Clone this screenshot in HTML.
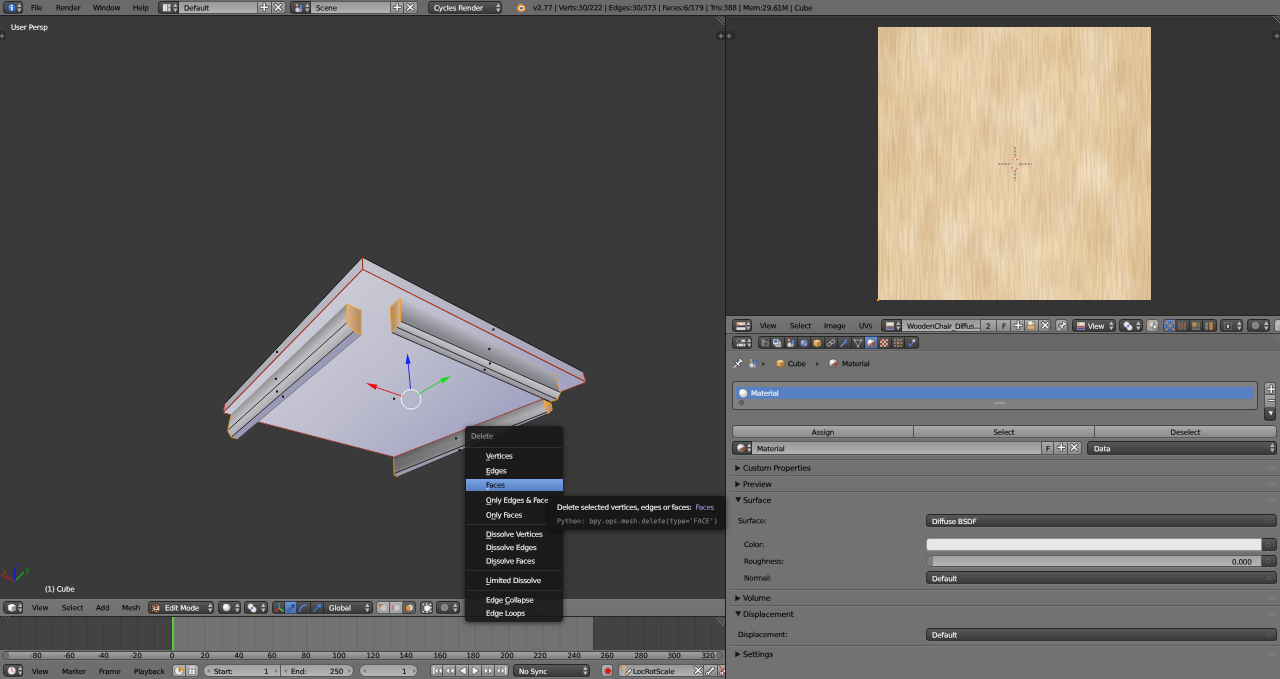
<!DOCTYPE html><html><head><meta charset="utf-8"><title>Blender</title><style>
*{box-sizing:border-box;margin:0;padding:0}
html,body{width:1280px;height:679px;overflow:hidden;background:#393939}
body{position:relative;font-family:"DejaVu Sans","Liberation Sans",sans-serif;font-size:7.2px;letter-spacing:-.19px;color:#000;line-height:1}
.a{position:absolute}
.t{position:absolute;white-space:nowrap;line-height:8px;height:8px}
.w{position:absolute;border:1px solid rgba(24,24,24,.55);white-space:nowrap;overflow:hidden;box-shadow:0 1px 0 rgba(255,255,255,.07)}
.ra{border-radius:3.5px}.rl{border-radius:3.5px 0 0 3.5px}.rr{border-radius:0 3.5px 3.5px 0}.rm{border-radius:0}
.rt{border-radius:3.5px 3.5px 0 0}.rb{border-radius:0 0 3.5px 3.5px}
.pl{border-radius:7px 0 0 7px}.pr{border-radius:0 7px 7px 0}.pa{border-radius:7px}
.nl{border-left-width:0}
.tool{background:linear-gradient(#a9a9a9,#8b8b8b);color:#000}
.menu{background:linear-gradient(#585858,#3a3a3a);color:#fff;border-color:rgba(16,16,16,.5)}
.text{background:linear-gradient(#979797,#b3b3b3);color:#000}
.num{background:linear-gradient(#a0a0a0,#b6b6b6);color:#000}
.tog{background:#9b9b9b;color:#000}
.togl{background:linear-gradient(#b2b2b2,#a2a2a2)}
.togsel{background:#626262;color:#fff}
.radsel{background:linear-gradient(#6690d2,#4670b2);color:#000;border-color:rgba(16,16,16,.5)}
.hdr{position:absolute;background:#6a6a6a}
.lbl{position:absolute;white-space:nowrap;line-height:8px;height:8px;color:#000}
.wl{position:absolute;left:5px;top:0;line-height:8px;height:8px;white-space:nowrap}
.ud{position:absolute;width:4px;height:9px}
svg{position:absolute;overflow:visible}
.mi{position:absolute;left:20.6px;letter-spacing:-.27px;white-space:nowrap;line-height:8px;height:8px;color:#fff}
.sep{position:absolute;left:1px;right:1px;height:1px;background:#2f2f2f}
.ph{position:absolute;left:730px;width:550px;height:1px;background:#5c5c5c;box-shadow:0 1px 0 #7c7c7c}
u{text-decoration:underline;text-decoration-thickness:.45px;text-underline-offset:1px;text-decoration-color:rgba(255,255,255,.75)}
</style></head><body><div id="root" class="a" style="left:0;top:0;width:1280px;height:679px;filter:contrast(1.001);-webkit-text-stroke:.1px">
<div class="a" style="left:0;top:16px;width:725px;height:583px;background:#3a3a3a"></div>
<div class="a" style="left:726px;top:16px;width:554px;height:300px;background:#343434"></div>
<div class="a" style="left:726px;top:16px;width:554px;height:1px;background:#3d3d3d"></div>
<div class="a" style="left:0;top:15px;width:1280px;height:1px;background:#1d1d1d"></div>
<div class="a" style="left:725px;top:16px;width:1px;height:663px;background:#1b1b1b"></div>
<div class="hdr" style="left:0px;top:0px;width:1280px;height:15px;background:#6a6a6a"></div>
<div class="w menu ra" style="left:3px;top:1px;width:20px;height:13px;"><svg class="a" style="left:3px;top:0.8px" width="9.5" height="9.5" viewBox="0 0 10 10"><circle cx="5" cy="5" r="4.3" fill="#3b6fc4" stroke="#1c3a78" stroke-width=".6"/><circle cx="4.2" cy="3.6" r="2.2" fill="#8fb4ee" opacity=".55"/><rect x="4.3" y="4.2" width="1.5" height="3.6" fill="#fff"/><rect x="4.3" y="2" width="1.5" height="1.4" fill="#fff"/></svg><svg class="a" style="left:13.1px;top:0.9px" width="4.6" height="9.6" viewBox="0 0 4.6 9.6"><path d="M2.3 0.3 L4.5 4 H0.1Z M2.3 9.3 L4.5 5.6 H0.1Z" fill="#b4b4b4"/></svg></div>
<div class="t" style="left:30.5px;top:4px;transform:translateY(0.3px) rotate(.05deg);">File</div>
<div class="t" style="left:56.3px;top:4px;transform:translateY(0.3px) rotate(.05deg);">Render</div>
<div class="t" style="left:93px;top:4px;transform:translateY(0.3px) rotate(.05deg);">Window</div>
<div class="t" style="left:133.3px;top:4px;transform:translateY(0.3px) rotate(.05deg);">Help</div>
<div class="w menu rl" style="left:158px;top:1px;width:21px;height:13px;"><svg class="a" style="left:3.2px;top:1px" width="9.5" height="9.5" viewBox="0 0 10 10"><rect x="0.8" y="1" width="8.4" height="8" fill="#dcdcdc" stroke="#555" stroke-width=".5"/><rect x="5.6" y="1.4" width="1" height="7.2" fill="#666"/><rect x="6.8" y="4.6" width="2.2" height=".8" fill="#666"/></svg><svg class="a" style="left:14.3px;top:0.9px" width="4.6" height="9.6" viewBox="0 0 4.6 9.6"><path d="M2.3 0.3 L4.5 4 H0.1Z M2.3 9.3 L4.5 5.6 H0.1Z" fill="#b4b4b4"/></svg></div>
<div class="w text rm nl" style="left:179px;top:1px;width:79px;height:13px;"><span class="wl" style="top:2px;transform:translateY(0.55px) rotate(.05deg);left:4.5px">Default</span></div>
<div class="w tool rm nl" style="left:258px;top:1px;width:14px;height:13px;"><svg class="a" style="left:1.3px;top:0.3px" width="10.4" height="10.4" viewBox="0 0 10 10"><path d="M5 .8V9.2M.8 5H9.2" stroke="#303030" stroke-width="2.7"/><path d="M5 1.3V8.7M1.3 5H8.7" stroke="#f4f4f4" stroke-width="1.5"/></svg></div>
<div class="w tool rr nl" style="left:272px;top:1px;width:14px;height:13px;"><svg class="a" style="left:1.3px;top:0.3px" width="10.4" height="10.4" viewBox="0 0 10 10"><path d="M1.5 1.5L8.5 8.5M8.5 1.5L1.5 8.5" stroke="#303030" stroke-width="2.7"/><path d="M1.9 1.9L8.1 8.1M8.1 1.9L1.9 8.1" stroke="#f4f4f4" stroke-width="1.5"/></svg></div>
<div class="w menu rl" style="left:290px;top:1px;width:21px;height:13px;"><svg class="a" style="left:2.6px;top:0.6px" width="10" height="10" viewBox="0 0 10 10"><circle cx="3.6" cy="6.8" r="2.5" fill="#d2d2d2" stroke="#4a4a4a" stroke-width=".4"/><rect x="5.4" y="2" width="3" height="5.2" fill="#5f82c4" stroke="#2c4478" stroke-width=".4"/><rect x="1.8" y="1" width="2.2" height="2.4" fill="#d89a58"/><circle cx="6.2" cy="7.6" r="1.5" fill="#a8a8a8"/></svg><svg class="a" style="left:14.3px;top:0.9px" width="4.6" height="9.6" viewBox="0 0 4.6 9.6"><path d="M2.3 0.3 L4.5 4 H0.1Z M2.3 9.3 L4.5 5.6 H0.1Z" fill="#b4b4b4"/></svg></div>
<div class="w text rm nl" style="left:311px;top:1px;width:80px;height:13px;"><span class="wl" style="top:2px;transform:translateY(0.55px) rotate(.05deg);left:4.5px">Scene</span></div>
<div class="w tool rm nl" style="left:391px;top:1px;width:13px;height:13px;"><svg class="a" style="left:1.3px;top:0.3px" width="10.4" height="10.4" viewBox="0 0 10 10"><path d="M5 .8V9.2M.8 5H9.2" stroke="#303030" stroke-width="2.7"/><path d="M5 1.3V8.7M1.3 5H8.7" stroke="#f4f4f4" stroke-width="1.5"/></svg></div>
<div class="w tool rr nl" style="left:404px;top:1px;width:14px;height:13px;"><svg class="a" style="left:1.3px;top:0.3px" width="10.4" height="10.4" viewBox="0 0 10 10"><path d="M1.5 1.5L8.5 8.5M8.5 1.5L1.5 8.5" stroke="#303030" stroke-width="2.7"/><path d="M1.9 1.9L8.1 8.1M8.1 1.9L1.9 8.1" stroke="#f4f4f4" stroke-width="1.5"/></svg></div>
<div class="w menu ra" style="left:428px;top:1px;width:74px;height:13px;"><span class="wl" style="top:2px;transform:translateY(0.55px) rotate(.05deg);left:5px">Cycles Render</span><svg class="a" style="left:67.2px;top:0.9px" width="4.6" height="9.6" viewBox="0 0 4.6 9.6"><path d="M2.3 0.3 L4.5 4 H0.1Z M2.3 9.3 L4.5 5.6 H0.1Z" fill="#bcbcbc"/></svg></div>
<svg class="a" style="left:514.5px;top:2px" width="11" height="11" viewBox="0 0 10 10"><ellipse cx="5.6" cy="5.6" rx="3.9" ry="3.3" fill="#f5922a"/><path d="M0.4 6.2 L5 2.2 L3.4 2.2 L4.2 1 L7.4 3.2Z" fill="#f5922a"/><circle cx="5.9" cy="5.6" r="2.1" fill="#fff"/><circle cx="5.9" cy="5.6" r="1.25" fill="#2b5fa8"/></svg>
<div class="t" style="left:533px;top:4px;transform:translateY(0.3px) rotate(.05deg);">v2.77 | Verts:30/222 | Edges:30/373 | Faces:6/179 | Tris:388 | Mem:29.61M | Cube</div>
<div class="t" style="left:10.8px;top:23px;transform:translateY(0.85px) rotate(.05deg);color:#fff;">User Persp</div>
<div class="t" style="left:44.7px;top:585px;transform:translateY(0.5px) rotate(.05deg);color:#fff;">(1) Cube</div>
<div class="a" style="left:0;top:31px;width:6px;height:9px;background:#2b2b2b;border-radius:0 3px 3px 0"></div><svg class="a" style="left:-1px;top:33px" width="6" height="6" viewBox="0 0 6 6"><path d="M3 .6V5.4M.6 3H5.4" stroke="#8e8e8e" stroke-width="1"/></svg>
<div class="a" style="left:716px;top:31px;width:9px;height:9px;background:#2b2b2b;border-radius:3px 0 0 3px"></div>
<svg class="a" style="left:718px;top:33px" width="6" height="6" viewBox="0 0 6 6"><path d="M3 .6V5.4M.6 3H5.4" stroke="#8e8e8e" stroke-width="1"/></svg>
<div class="a" style="left:726px;top:31px;width:9px;height:9px;background:#2b2b2b;border-radius:0 3px 3px 0"></div>
<svg class="a" style="left:726px;top:33px" width="6" height="6" viewBox="0 0 6 6"><path d="M3 .6V5.4M.6 3H5.4" stroke="#8e8e8e" stroke-width="1"/></svg>
<div class="a" style="left:1272px;top:31px;width:8px;height:9px;background:#2b2b2b;border-radius:3px 0 0 3px"></div><svg class="a" style="left:1274px;top:33px" width="6" height="6" viewBox="0 0 6 6"><path d="M3 .6V5.4M.6 3H5.4" stroke="#8e8e8e" stroke-width="1"/></svg>
<svg class="a" style="left:0;top:0" width="725" height="600" viewBox="0 0 725 600">
<defs>
<linearGradient id="gu" gradientUnits="userSpaceOnUse" x1="330" y1="290" x2="470" y2="450"><stop offset="0" stop-color="#cbcbd5"/><stop offset=".5" stop-color="#bcbcce"/><stop offset="1" stop-color="#a3a3c2"/></linearGradient>
<linearGradient id="gl" gradientUnits="userSpaceOnUse" x1="362" y1="262" x2="224" y2="408"><stop offset="0" stop-color="#bcbcc6"/><stop offset="1" stop-color="#a9a9b3"/></linearGradient>
<linearGradient id="gr" gradientUnits="userSpaceOnUse" x1="362" y1="262" x2="585" y2="377"><stop offset="0" stop-color="#c4c4ce"/><stop offset=".5" stop-color="#b0b0c0"/><stop offset="1" stop-color="#a2a2b6"/></linearGradient>
<linearGradient id="l1" gradientUnits="userSpaceOnUse" x1="283" y1="353" x2="295" y2="366"><stop offset="0" stop-color="#c2c2c8"/><stop offset=".45" stop-color="#8e8e94"/><stop offset="1" stop-color="#bdbdc1"/></linearGradient>
<linearGradient id="l2" gradientUnits="userSpaceOnUse" x1="290" y1="376" x2="297" y2="384"><stop offset="0" stop-color="#c0c0c4"/><stop offset="1" stop-color="#a2a2a8"/></linearGradient>
<linearGradient id="r1" gradientUnits="userSpaceOnUse" x1="482" y1="332" x2="474" y2="350"><stop offset="0" stop-color="#c8c8d2"/><stop offset=".5" stop-color="#a6a6b0"/><stop offset="1" stop-color="#86868e"/></linearGradient>
<linearGradient id="r2" gradientUnits="userSpaceOnUse" x1="478" y1="357" x2="474" y2="366"><stop offset="0" stop-color="#c2c2c8"/><stop offset="1" stop-color="#9a9aa2"/></linearGradient>
<linearGradient id="r3" gradientUnits="userSpaceOnUse" x1="475" y1="364" x2="472" y2="371"><stop offset="0" stop-color="#a6a6ae"/><stop offset="1" stop-color="#808088"/></linearGradient>
<linearGradient id="b1" gradientUnits="userSpaceOnUse" x1="396" y1="466" x2="546" y2="405"><stop offset="0" stop-color="#6c6c6e"/><stop offset=".5" stop-color="#8e8e90"/><stop offset="1" stop-color="#b8b8bc"/></linearGradient><linearGradient id="b1o" gradientUnits="userSpaceOnUse" x1="466" y1="428" x2="472" y2="444"><stop offset="0" stop-color="#000" stop-opacity=".22"/><stop offset=".5" stop-color="#000" stop-opacity="0"/><stop offset="1" stop-color="#fff" stop-opacity=".18"/></linearGradient>
<linearGradient id="wc" x1="0" y1="0" x2="1" y2="0"><stop offset="0" stop-color="#d8b68a"/><stop offset=".55" stop-color="#c29c70"/><stop offset="1" stop-color="#b48c60"/></linearGradient><linearGradient id="wc2" x1="0" y1="0" x2="1" y2="0"><stop offset="0" stop-color="#b08858"/><stop offset=".5" stop-color="#c09868"/><stop offset="1" stop-color="#d8b88e"/></linearGradient>
</defs>
<polygon points="394.1,457 541.7,399.7 548.4,411.4 394.1,473.6" fill="url(#b1)"/>
<polygon points="394.1,457 541.7,399.7 548.4,411.4 394.1,473.6" fill="url(#b1o)"/>
<polygon points="394.1,473.6 548.4,411.4 549.4,412.8 397.4,476.7" fill="#9a9aac"/>
<path d="M394.1 473.6L548.4 411.4" stroke="#161616" stroke-width=".85"/>
<path d="M397.4 476.9L549.6 413.2" stroke="#2a2a2a" stroke-width=".6"/>
<path d="M393.7 457.6L394.1 475.2L397.4 476.8" fill="none" stroke="#f0a030" stroke-width=".9"/>
<polygon points="542.9,399.6 551.1,403.7 552.2,409.9 548,413.6 544.5,407" fill="url(#wc)" stroke="#f0a030" stroke-width=".9"/>
<polygon points="362.4,257.1 362.7,269.3 223.2,412.7 224.6,403.8" fill="url(#gl)"/>
<polygon points="362.4,257.1 583.1,371.8 586.2,382 362.7,269.3" fill="url(#gr)"/>
<polygon points="362.7,269.3 586.2,382 394.1,457 223.2,412.7" fill="url(#gu)"/>
<path d="M224.6,403.8 L362.4,257.1 L583.1,371.8" fill="none" stroke="#161616" stroke-width="1"/>
<path d="M362.4,257.1 L362.7,269.3 M223.2,412.7 L362.7,269.3 L586.2,382 M224.6,403.8 L223.2,412.7 M583.1,371.8 L586.2,382" fill="none" stroke="#a62c1a" stroke-width="1.05"/>
<path d="M223.2,412.7 L394.1,457 L586.2,382" fill="none" stroke="#b42c1a" stroke-width="1" stroke-dasharray="2 1.1"/>
<polygon points="346.8,304.2 346.8,322.7 227.6,430.5 231.3,414.2" fill="url(#l1)"/>
<polygon points="346.8,322.7 353.8,331.3 231.3,437.2 227.6,430.5" fill="url(#l2)"/>
<polygon points="353.8,331.3 361.2,334.6 238,438.7 231.3,437.2" fill="#9a9ab6"/>
<path d="M346.8,322.7 L227.6,430.5 M353.8,331.3 L231.3,437.2" stroke="#161616" stroke-width=".85"/>
<path d="M361.2,334.6 L238,438.7" stroke="#4a4a5a" stroke-width=".5"/>
<path d="M346.8,304.2 L231.3,414.2" stroke="#8c8c94" stroke-width=".5"/>
<polygon points="346.8,304.2 361.2,310.1 361.2,334.6 353.8,331.3 346.8,322.7" fill="url(#wc)" stroke="#f0a030" stroke-width=".9"/>
<path d="M231.3,414.2 L227.6,430.5 L231.3,437.2 L238,438.7" fill="none" stroke="#f0a030" stroke-width=".9"/>
<polygon points="400.5,298.2 400.5,321.2 560.4,392.4 554.2,373.2" fill="url(#r1)"/>
<polygon points="400.5,321.2 396.4,327 557.3,399.6 560.4,392.4" fill="url(#r2)"/>
<polygon points="396.4,327 391.6,332.4 550,401.6 557.3,399.6" fill="url(#r3)"/>
<path d="M400.5,321.2 L560.4,392.4 M396.4,327 L557.3,399.6 M391.6,332.4 L550,401.6" stroke="#161616" stroke-width=".85"/>
<polygon points="400.5,298.2 390.2,307.1 391.6,332.4 396.4,327 400.5,321.2" fill="url(#wc2)" stroke="#f0a030" stroke-width=".9"/>
<path d="M554.2,373.2 L560.4,392.4 L557.3,399.6 L550,401.6" fill="none" stroke="#f0a030" stroke-width=".9"/>
<rect x="276" y="350.9" width="2" height="2" fill="#0c0c0c"/>
<rect x="274.9" y="377.9" width="2" height="2" fill="#0c0c0c"/>
<rect x="276" y="390.5" width="2" height="2" fill="#0c0c0c"/>
<rect x="282" y="395.6" width="2" height="2" fill="#0c0c0c"/>
<rect x="393.1" y="397.7" width="2" height="2" fill="#0c0c0c"/>
<rect x="492.4" y="328.5" width="2" height="2" fill="#0c0c0c"/>
<rect x="488.3" y="348.1" width="2" height="2" fill="#0c0c0c"/>
<rect x="488.9" y="362.5" width="2" height="2" fill="#0c0c0c"/>
<rect x="483.7" y="368.7" width="2" height="2" fill="#0c0c0c"/>
<rect x="455" y="437.4" width="2" height="2" fill="#0c0c0c"/>
<rect x="458.6" y="449" width="2" height="2" fill="#0c0c0c"/>
<rect x="352.8" y="318.3" width="2" height="2" fill="#ff9a10"/>
<rect x="394.8" y="315" width="2" height="2" fill="#ff9a10"/>
<rect x="545.6" y="402.2" width="2" height="2" fill="#ff9a10"/>
<rect x="547.6" y="403.4" width="2" height="2" fill="#ff9a10"/>
<path d="M403.1 396.5L376.8 387.5" stroke="#e02020" stroke-width="1"/>
<polygon points="365.7,383 377.4,384.8 375.6,389.8" fill="#ee1010"/>
<path d="M418.1 394.4L441 381" stroke="#20d020" stroke-width="1"/>
<polygon points="451.1,375.9 442.6,383.4 440.2,378.8" fill="#18e018"/>
<path d="M410.6 389.4L408.2 363.5" stroke="#2030e0" stroke-width="1"/>
<polygon points="407.4,353.2 410.6,363.6 405.6,364" fill="#1020f0"/>
<circle cx="411" cy="399.3" r="9.8" fill="none" stroke="#fff" stroke-width=".9"/>
<path d="M14.7 581.2L1.4 574.7" stroke="#cc1a1a" stroke-width="1.1"/><path d="M14.7 581.2L23.8 572.2" stroke="#18a418" stroke-width="1.4"/><path d="M14.7 581.4V568.4" stroke="#1616c4" stroke-width="1.5"/>
<text x="2.6" y="573.6" font-size="7" fill="#d02020">x</text><text x="25.4" y="571.6" font-size="7" fill="#18a418">y</text><text x="16.2" y="567.2" font-size="7" fill="#2828d8">z</text>
</svg>
<div class="a" style="left:0;top:599px;width:725px;height:17px;background:linear-gradient(#767676,#707070)"></div>
<div class="a" style="left:0;top:615.6px;width:725px;height:1.2px;background:#262626"></div>
<div class="w menu ra" style="left:3px;top:601px;width:20px;height:13px;"><svg class="a" style="left:2.6px;top:0.8px" width="9.5" height="9.5" viewBox="0 0 10 10"><path d="M1 2.4L5.6 1l3.4 1.6v5L5 9.2 1 7.4Z" fill="#f2f2f2" stroke="#555" stroke-width=".5"/><path d="M5 4v5.2L9 7.6v-5Z" fill="#9a9a9a"/><path d="M1 2.4L5 4l4-1.4L5.6 1Z" fill="#fff"/></svg><svg class="a" style="left:13.5px;top:0.9px" width="4.6" height="9.6" viewBox="0 0 4.6 9.6"><path d="M2.3 0.3 L4.5 4 H0.1Z M2.3 9.3 L4.5 5.6 H0.1Z" fill="#b4b4b4"/></svg></div>
<div class="t" style="left:31.5px;top:604px;transform:translateY(0.2px) rotate(.05deg);">View</div>
<div class="t" style="left:61.5px;top:604px;transform:translateY(0.2px) rotate(.05deg);">Select</div>
<div class="t" style="left:95.8px;top:604px;transform:translateY(0.2px) rotate(.05deg);">Add</div>
<div class="t" style="left:121.8px;top:604px;transform:translateY(0.2px) rotate(.05deg);">Mesh</div>
<div class="w menu ra" style="left:148px;top:601px;width:66px;height:13px;"><svg class="a" style="left:2.4px;top:0.6px" width="10" height="10" viewBox="0 0 10 10"><path d="M1.6 3L6 1.6l2.6 1.6v4.2L5 8.8 1.6 7.4Z" fill="#c9c9c9" stroke="#444" stroke-width=".5"/><g fill="#f0a050" stroke="#6a1c00" stroke-width=".7"><rect x=".6" y="2" width="2" height="2"/><rect x="4.6" y=".6" width="2" height="2"/><rect x=".6" y="6.4" width="2" height="2"/><rect x="4.2" y="7.6" width="2" height="2"/><rect x="4" y="3.6" width="2" height="2"/></g></svg><span class="wl" style="top:2px;transform:translateY(0.6px) rotate(.05deg);left:15.8px">Edit Mode</span><svg class="a" style="left:58.7px;top:0.9px" width="4.6" height="9.6" viewBox="0 0 4.6 9.6"><path d="M2.3 0.3 L4.5 4 H0.1Z M2.3 9.3 L4.5 5.6 H0.1Z" fill="#bcbcbc"/></svg></div>
<div class="w menu ra" style="left:218px;top:601px;width:23px;height:13px;"><svg class="a" style="left:3px;top:1px" width="9" height="9" viewBox="0 0 10 10"><circle cx="5" cy="5" r="4.2" fill="#d4d4d4" stroke="#4a4a4a" stroke-width=".4"/><circle cx="4" cy="3.8" r="2.6" fill="#f6f6f6"/></svg><svg class="a" style="left:15.7px;top:0.9px" width="4.6" height="9.6" viewBox="0 0 4.6 9.6"><path d="M2.3 0.3 L4.5 4 H0.1Z M2.3 9.3 L4.5 5.6 H0.1Z" fill="#bcbcbc"/></svg></div>
<div class="w menu ra" style="left:244px;top:601px;width:24px;height:13px;"><svg class="a" style="left:2.4px;top:0.8px" width="10" height="10" viewBox="0 0 10 10"><circle cx="3.6" cy="3.4" r="2.9" fill="#e8e8e8" stroke="#555" stroke-width=".4"/><circle cx="6.6" cy="6.6" r="2.9" fill="#e8e8e8" stroke="#555" stroke-width=".4"/><rect x="4" y="4" width="2.2" height="2.2" fill="#2f6fdc" stroke="#fff" stroke-width=".4"/></svg><svg class="a" style="left:16.1px;top:0.9px" width="4.6" height="9.6" viewBox="0 0 4.6 9.6"><path d="M2.3 0.3 L4.5 4 H0.1Z M2.3 9.3 L4.5 5.6 H0.1Z" fill="#bcbcbc"/></svg></div>
<div class="w menu rl" style="left:272px;top:601px;width:13px;height:13px;"><svg class="a" style="left:1px;top:0.4px" width="10.5" height="10.5" viewBox="0 0 10 10"><path d="M5 6V0.6" stroke="#3b7be0" stroke-width="1.3"/><path d="M5 6L0.8 9" stroke="#e03a2a" stroke-width="1.3"/><path d="M5 6L9.2 9" stroke="#5cc83a" stroke-width="1.3"/></svg></div>
<div class="w radsel rm nl" style="left:285px;top:601px;width:12px;height:13px;"><svg class="a" style="left:0.8px;top:0.6px" width="10" height="10" viewBox="0 0 10 10"><path d="M1.6 8.6L6.6 3.4" stroke="#1c3f86" stroke-width="1.8"/><path d="M8.8 1.2L8 5.2 4.8 2Z" fill="#1c3f86"/><path d="M1.6 8.4L6.6 3.2" stroke="#9cc0f4" stroke-width=".6"/></svg></div>
<div class="w menu rm nl" style="left:297px;top:601px;width:14px;height:13px;"><svg class="a" style="left:1.4px;top:0.6px" width="10" height="10" viewBox="0 0 10 10"><path d="M1.4 8.6C2 4.6 4.6 2.2 8.8 1.8" stroke="#4f86d8" stroke-width="1.5" fill="none"/></svg></div>
<div class="w menu rm nl" style="left:311px;top:601px;width:13px;height:13px;"><svg class="a" style="left:1.2px;top:0.6px" width="10" height="10" viewBox="0 0 10 10"><path d="M1.4 8.8L6.2 3.8" stroke="#3d74c8" stroke-width="1.4"/><rect x="5.4" y="1" width="3.6" height="3.6" fill="#4f86d8" stroke="#244d94" stroke-width=".4"/></svg></div>
<div class="w menu rr nl" style="left:324px;top:601px;width:49px;height:13px;"><span class="wl" style="top:2px;transform:translateY(0.6px) rotate(.05deg);left:5.4px">Global</span><svg class="a" style="left:41.3px;top:0.9px" width="4.6" height="9.6" viewBox="0 0 4.6 9.6"><path d="M2.3 0.3 L4.5 4 H0.1Z M2.3 9.3 L4.5 5.6 H0.1Z" fill="#bcbcbc"/></svg></div>
<div class="w togl rl" style="left:376px;top:601px;width:14px;height:13px;"><svg class="a" style="left:0.6px;top:0.4px" width="10.5" height="10.5" viewBox="0 0 10 10"><path d="M2 3.4L6.2 2l2.6 1.4v4L5.2 9 2 7.6Z" fill="#c6c6c6" stroke="#8a8a8a" stroke-width=".5"/><rect x="1" y="2.2" width="2.2" height="2.2" fill="#f6a040" stroke="#7a3a00" stroke-width=".4"/></svg></div>
<div class="w togl rm nl" style="left:390px;top:601px;width:13px;height:13px;"><svg class="a" style="left:0.8px;top:0.4px" width="10.5" height="10.5" viewBox="0 0 10 10"><path d="M2 3.4L6.2 2l2.6 1.4v4L5.2 9 2 7.6Z" fill="#c6c6c6" stroke="#8a8a8a" stroke-width=".5"/><path d="M2 3.4V7.6" stroke="#e0602a" stroke-width="1.2"/></svg></div>
<div class="w togsel rr nl" style="left:403px;top:601px;width:13px;height:13px;"><svg class="a" style="left:0.8px;top:0.4px" width="10.5" height="10.5" viewBox="0 0 10 10"><path d="M2 3.4L6.2 2l2.6 1.4v4L5.2 9 2 7.6Z" fill="#d0d0d0" stroke="#333" stroke-width=".5"/><path d="M2 3.4L5.2 4.6V9L2 7.6Z" fill="#f5a030" stroke="#7a3a00" stroke-width=".4"/></svg></div>
<div class="w togsel ra" style="left:420px;top:601px;width:13px;height:13px;"><svg class="a" style="left:0.8px;top:0.6px" width="10" height="10" viewBox="0 0 10 10"><path d="M2.2 3.2L6 2l2 1.2v3.8L5.2 8.4 2.2 7.2Z" fill="#f4f4f4" stroke="#777" stroke-width=".4"/><g fill="#fff"><rect x=".6" y=".8" width="1.3" height="1.3"/><rect x="4" y=".4" width="1.3" height="1.3"/><rect x="7.8" y=".8" width="1.3" height="1.3"/><rect x=".6" y="8" width="1.3" height="1.3"/><rect x="4.4" y="8.6" width="1.3" height="1.3"/><rect x="8" y="7.6" width="1.3" height="1.3"/><rect x="8.2" y="4" width="1.3" height="1.3"/></g></svg></div>
<div class="w menu ra" style="left:436px;top:601px;width:24px;height:13px;"><svg class="a" style="left:3px;top:1px" width="9" height="9" viewBox="0 0 10 10"><circle cx="5" cy="5" r="3.6" fill="#8a8a8a" stroke="#9c9c9c" stroke-width=".7"/><circle cx="5" cy="5" r="1.6" fill="#7a7a7a"/></svg><svg class="a" style="left:16.3px;top:0.9px" width="4.6" height="9.6" viewBox="0 0 4.6 9.6"><path d="M2.3 0.3 L4.5 4 H0.1Z M2.3 9.3 L4.5 5.6 H0.1Z" fill="#bcbcbc"/></svg></div>
<div class="w tog rm" style="left:464px;top:601px;width:14px;height:13px;opacity:.55"></div>
<div class="w tog rm" style="left:478px;top:601px;width:14px;height:13px;opacity:.55"></div>
<div class="w tog rm" style="left:492px;top:601px;width:12px;height:13px;opacity:.55"></div>
<div class="w tog rm" style="left:504px;top:601px;width:12px;height:13px;opacity:.55"></div>
<div class="w tog rm" style="left:516px;top:601px;width:12px;height:13px;opacity:.55"></div>
<div class="w tog rm" style="left:534px;top:601px;width:13px;height:13px;opacity:.55"></div>
<div class="w tog rm" style="left:547px;top:601px;width:13px;height:13px;opacity:.55"></div>
<div class="a" style="left:0;top:617px;width:725px;height:33px;background:#434343"></div>
<div class="a" style="left:173px;top:617px;width:420px;height:33px;background:#727272"></div>
<svg class="a" style="left:0;top:616.8px" width="725" height="34.2" viewBox="0 0 725 34.2"><path d="M2.3 0V34.2" stroke="#3b3b3b" stroke-width=".8"/><path d="M19.2 0V34.2" stroke="#3b3b3b" stroke-width=".8"/><path d="M36.1 0V34.2" stroke="#3b3b3b" stroke-width=".8"/><path d="M53 0V34.2" stroke="#3b3b3b" stroke-width=".8"/><path d="M69.9 0V34.2" stroke="#3b3b3b" stroke-width=".8"/><path d="M86.8 0V34.2" stroke="#3b3b3b" stroke-width=".8"/><path d="M103.7 0V34.2" stroke="#3b3b3b" stroke-width=".8"/><path d="M120.6 0V34.2" stroke="#3b3b3b" stroke-width=".8"/><path d="M137.5 0V34.2" stroke="#3b3b3b" stroke-width=".8"/><path d="M154.4 0V34.2" stroke="#3b3b3b" stroke-width=".8"/><path d="M171.3 0V34.2" stroke="#3b3b3b" stroke-width=".8"/><path d="M188.2 0V34.2" stroke="#676767" stroke-width=".8"/><path d="M205.1 0V34.2" stroke="#676767" stroke-width=".8"/><path d="M222 0V34.2" stroke="#676767" stroke-width=".8"/><path d="M238.9 0V34.2" stroke="#676767" stroke-width=".8"/><path d="M255.8 0V34.2" stroke="#676767" stroke-width=".8"/><path d="M272.7 0V34.2" stroke="#676767" stroke-width=".8"/><path d="M289.6 0V34.2" stroke="#676767" stroke-width=".8"/><path d="M306.5 0V34.2" stroke="#676767" stroke-width=".8"/><path d="M323.4 0V34.2" stroke="#676767" stroke-width=".8"/><path d="M340.3 0V34.2" stroke="#676767" stroke-width=".8"/><path d="M357.2 0V34.2" stroke="#676767" stroke-width=".8"/><path d="M374.1 0V34.2" stroke="#676767" stroke-width=".8"/><path d="M391 0V34.2" stroke="#676767" stroke-width=".8"/><path d="M407.9 0V34.2" stroke="#676767" stroke-width=".8"/><path d="M424.8 0V34.2" stroke="#676767" stroke-width=".8"/><path d="M441.7 0V34.2" stroke="#676767" stroke-width=".8"/><path d="M458.6 0V34.2" stroke="#676767" stroke-width=".8"/><path d="M475.5 0V34.2" stroke="#676767" stroke-width=".8"/><path d="M492.4 0V34.2" stroke="#676767" stroke-width=".8"/><path d="M509.3 0V34.2" stroke="#676767" stroke-width=".8"/><path d="M526.2 0V34.2" stroke="#676767" stroke-width=".8"/><path d="M543.1 0V34.2" stroke="#676767" stroke-width=".8"/><path d="M560 0V34.2" stroke="#676767" stroke-width=".8"/><path d="M576.9 0V34.2" stroke="#676767" stroke-width=".8"/><path d="M593.8 0V34.2" stroke="#3b3b3b" stroke-width=".8"/><path d="M610.7 0V34.2" stroke="#3b3b3b" stroke-width=".8"/><path d="M627.6 0V34.2" stroke="#3b3b3b" stroke-width=".8"/><path d="M644.5 0V34.2" stroke="#3b3b3b" stroke-width=".8"/><path d="M661.4 0V34.2" stroke="#3b3b3b" stroke-width=".8"/><path d="M678.3 0V34.2" stroke="#3b3b3b" stroke-width=".8"/><path d="M695.2 0V34.2" stroke="#3b3b3b" stroke-width=".8"/><path d="M712.1 0V34.2" stroke="#3b3b3b" stroke-width=".8"/><rect x="171.9" y="0" width="2.1" height="34.2" fill="#58cc38"/></svg>
<div class="hdr" style="left:0px;top:650px;width:725px;height:12px;background:#737373"></div>
<div class="a" style="left:1.5px;top:651px;width:721px;height:8.6px;border-radius:4.3px;background:linear-gradient(#a4a4a4,#7e7e7e);border:1px solid rgba(40,40,40,.65)"></div>
<div class="a" style="left:2.6px;top:652px;width:6.6px;height:6.6px;border-radius:50%;background:#6c6c6c"></div>
<div class="a" style="left:715.6px;top:652px;width:6.6px;height:6.6px;border-radius:50%;background:#6c6c6c"></div>
<div class="t" style="left:15.78px;width:40px;text-align:center;top:652px;transform:translateY(.05px) rotate(.05deg)">-80</div>
<div class="t" style="left:49.28px;width:40px;text-align:center;top:652px;transform:translateY(.05px) rotate(.05deg)">-60</div>
<div class="t" style="left:82.79px;width:40px;text-align:center;top:652px;transform:translateY(.05px) rotate(.05deg)">-40</div>
<div class="t" style="left:116.29px;width:40px;text-align:center;top:652px;transform:translateY(.05px) rotate(.05deg)">-20</div>
<div class="t" style="left:151.5px;width:40px;text-align:center;top:652px;transform:translateY(.05px) rotate(.05deg)">0</div>
<div class="t" style="left:185.01px;width:40px;text-align:center;top:652px;transform:translateY(.05px) rotate(.05deg)">20</div>
<div class="t" style="left:218.51px;width:40px;text-align:center;top:652px;transform:translateY(.05px) rotate(.05deg)">40</div>
<div class="t" style="left:252.02px;width:40px;text-align:center;top:652px;transform:translateY(.05px) rotate(.05deg)">60</div>
<div class="t" style="left:285.52px;width:40px;text-align:center;top:652px;transform:translateY(.05px) rotate(.05deg)">80</div>
<div class="t" style="left:319.03px;width:40px;text-align:center;top:652px;transform:translateY(.05px) rotate(.05deg)">100</div>
<div class="t" style="left:352.54px;width:40px;text-align:center;top:652px;transform:translateY(.05px) rotate(.05deg)">120</div>
<div class="t" style="left:386.04px;width:40px;text-align:center;top:652px;transform:translateY(.05px) rotate(.05deg)">140</div>
<div class="t" style="left:419.55px;width:40px;text-align:center;top:652px;transform:translateY(.05px) rotate(.05deg)">160</div>
<div class="t" style="left:453.05px;width:40px;text-align:center;top:652px;transform:translateY(.05px) rotate(.05deg)">180</div>
<div class="t" style="left:486.56px;width:40px;text-align:center;top:652px;transform:translateY(.05px) rotate(.05deg)">200</div>
<div class="t" style="left:520.07px;width:40px;text-align:center;top:652px;transform:translateY(.05px) rotate(.05deg)">220</div>
<div class="t" style="left:553.57px;width:40px;text-align:center;top:652px;transform:translateY(.05px) rotate(.05deg)">240</div>
<div class="t" style="left:587.08px;width:40px;text-align:center;top:652px;transform:translateY(.05px) rotate(.05deg)">260</div>
<div class="t" style="left:620.58px;width:40px;text-align:center;top:652px;transform:translateY(.05px) rotate(.05deg)">280</div>
<div class="t" style="left:654.09px;width:40px;text-align:center;top:652px;transform:translateY(.05px) rotate(.05deg)">300</div>
<div class="t" style="left:687.6px;width:40px;text-align:center;top:652px;transform:translateY(.05px) rotate(.05deg)">320</div>
<div class="hdr" style="left:0px;top:662px;width:725px;height:17px;background:#6e6e6e"></div>
<div class="w menu ra" style="left:3px;top:664px;width:20px;height:13px;"><svg class="a" style="left:2.6px;top:0.8px" width="9.5" height="9.5" viewBox="0 0 10 10"><circle cx="5" cy="5" r="4.2" fill="#e9e9e9" stroke="#555" stroke-width=".5"/><path d="M5 5V2M5 5L7 6.2" stroke="#c8402a" stroke-width=".8"/></svg><svg class="a" style="left:13.5px;top:0.9px" width="4.6" height="9.6" viewBox="0 0 4.6 9.6"><path d="M2.3 0.3 L4.5 4 H0.1Z M2.3 9.3 L4.5 5.6 H0.1Z" fill="#b4b4b4"/></svg></div>
<div class="t" style="left:31.5px;top:667px;transform:translateY(0.9px) rotate(.05deg);">View</div>
<div class="t" style="left:61.9px;top:667px;transform:translateY(0.9px) rotate(.05deg);">Marker</div>
<div class="t" style="left:98.8px;top:667px;transform:translateY(0.9px) rotate(.05deg);">Frame</div>
<div class="t" style="left:133.5px;top:667px;transform:translateY(0.9px) rotate(.05deg);">Playback</div>
<div class="w togl rl" style="left:172px;top:664px;width:14px;height:13px;"><svg class="a" style="left:1.2px;top:0.6px" width="10" height="10" viewBox="0 0 10 10"><circle cx="5" cy="5" r="4.2" fill="#ececec" stroke="#555" stroke-width=".5"/><path d="M5 5V0.8A4.2 4.2 0 0 1 9.2 5Z" fill="#f39a28"/><path d="M5 5V2M5 5L7 6.4" stroke="#333" stroke-width=".6"/></svg></div>
<div class="w togl rr nl" style="left:186px;top:664px;width:13px;height:13px;"><svg class="a" style="left:1px;top:0.4px" width="10" height="10" viewBox="0 0 10 10"><rect x="2" y="4.4" width="6" height="4.8" fill="#f0f0f0" stroke="#555" stroke-width=".5"/><path d="M3.2 4.4V3a1.8 1.8 0 0 1 3.6 0V4.4" fill="none" stroke="#e8e8e8" stroke-width="1"/><rect x="4.4" y="6" width="1.2" height="1.8" fill="#555"/></svg></div>
<div class="w num pl" style="left:203px;top:664px;width:78px;height:13px;"><svg class="a" style="left:3.4px;top:3.5px" width="3" height="4" viewBox="0 0 3 4"><path d="M2.8 0L0 2L2.8 4Z" fill="#7a7a7a"/></svg><span class="wl" style="top:3px;transform:translateY(0.1px) rotate(.05deg);left:10px">Start:</span><span class="wl" style="top:3px;transform:translateY(0.1px) rotate(.05deg);left:auto;right:11.5px">1</span><svg class="a" style="left:70.6px;top:3.5px" width="3" height="4" viewBox="0 0 3 4"><path d="M0.2 0L3 2L0.2 4Z" fill="#7a7a7a"/></svg></div>
<div class="w num pr nl" style="left:281px;top:664px;width:73px;height:13px;"><svg class="a" style="left:3px;top:3.5px" width="3" height="4" viewBox="0 0 3 4"><path d="M2.8 0L0 2L2.8 4Z" fill="#7a7a7a"/></svg><span class="wl" style="top:3px;transform:translateY(0.1px) rotate(.05deg);left:10px">End:</span><span class="wl" style="top:3px;transform:translateY(0.1px) rotate(.05deg);left:auto;right:9.6px">250</span><svg class="a" style="left:67.2px;top:3.5px" width="3" height="4" viewBox="0 0 3 4"><path d="M0.2 0L3 2L0.2 4Z" fill="#7a7a7a"/></svg></div>
<div class="w num pa" style="left:359px;top:664px;width:59px;height:13px;"><svg class="a" style="left:3.2px;top:3.5px" width="3" height="4" viewBox="0 0 3 4"><path d="M2.8 0L0 2L2.8 4Z" fill="#7a7a7a"/></svg><span class="wl" style="top:3px;transform:translateY(0.1px) rotate(.05deg);left:auto;right:11px">1</span><svg class="a" style="left:52.8px;top:3.5px" width="3" height="4" viewBox="0 0 3 4"><path d="M0.2 0L3 2L0.2 4Z" fill="#7a7a7a"/></svg></div>
<div class="w tool rl" style="left:430px;top:664px;width:13px;height:13px;"><svg class="a" style="left:0.6px;top:-0.1px" width="11.4" height="11.4" viewBox="0 0 10 10"><path d="M1.6 2V8" stroke="#f4f4f4" stroke-width="1.2"/><path d="M5.4 2L2.4 5L5.4 8ZM8.8 2L5.8 5L8.8 8Z" fill="#f4f4f4" stroke="#333" stroke-width=".4"/></svg></div>
<div class="w tool rm nl" style="left:443px;top:664px;width:13px;height:13px;"><svg class="a" style="left:0.6px;top:-0.1px" width="11.4" height="11.4" viewBox="0 0 10 10"><path d="M5 2L1.6 5L5 8ZM8.8 2L5.4 5L8.8 8Z" fill="#f4f4f4" stroke="#333" stroke-width=".4"/></svg></div>
<div class="w tool rm nl" style="left:456px;top:664px;width:13px;height:13px;"><svg class="a" style="left:0.6px;top:-0.1px" width="11.4" height="11.4" viewBox="0 0 10 10"><path d="M8 1.2L2 5L8 8.8Z" fill="#f4f4f4" stroke="#333" stroke-width=".5"/></svg></div>
<div class="w tool rm nl" style="left:469px;top:664px;width:13px;height:13px;"><svg class="a" style="left:0.6px;top:-0.1px" width="11.4" height="11.4" viewBox="0 0 10 10"><path d="M2 1.2L8 5L2 8.8Z" fill="#f4f4f4" stroke="#333" stroke-width=".5"/></svg></div>
<div class="w tool rm nl" style="left:482px;top:664px;width:13px;height:13px;"><svg class="a" style="left:0.6px;top:-0.1px" width="11.4" height="11.4" viewBox="0 0 10 10"><path d="M5 2L8.4 5L5 8ZM1.2 2L4.6 5L1.2 8Z" fill="#f4f4f4" stroke="#333" stroke-width=".4"/></svg></div>
<div class="w tool rr nl" style="left:495px;top:664px;width:14px;height:13px;"><svg class="a" style="left:0.6px;top:-0.1px" width="11.4" height="11.4" viewBox="0 0 10 10"><path d="M8.4 2V8" stroke="#f4f4f4" stroke-width="1.2"/><path d="M4.6 2L7.6 5L4.6 8ZM1.2 2L4.2 5L1.2 8Z" fill="#f4f4f4" stroke="#333" stroke-width=".4"/></svg></div>
<div class="w menu ra" style="left:513px;top:664px;width:77px;height:13px;"><span class="wl" style="top:3px;transform:translateY(0.1px) rotate(.05deg);left:5.4px">No Sync</span><svg class="a" style="left:69.3px;top:0.9px" width="4.6" height="9.6" viewBox="0 0 4.6 9.6"><path d="M2.3 0.3 L4.5 4 H0.1Z M2.3 9.3 L4.5 5.6 H0.1Z" fill="#bcbcbc"/></svg></div>
<div class="w togl ra" style="left:601px;top:664px;width:12px;height:13px;"><svg class="a" style="left:1.2px;top:0.8px" width="10" height="10" viewBox="0 0 10 10"><circle cx="5" cy="5" r="2.7" fill="#e41414"/><circle cx="5" cy="5" r="3.2" fill="none" stroke="#8a2020" stroke-width=".7" stroke-dasharray="1 .8"/></svg></div>
<div class="w text rl" style="left:618px;top:664px;width:86px;height:13px;"><svg class="a" style="left:2.4px;top:0.4px" width="10.5" height="10.5" viewBox="0 0 10 10"><circle cx="2.8" cy="2.4" r="1.5" fill="none" stroke="#e8b070" stroke-width="1.1"/><path d="M2.8 3.8V9.4M2.8 7.4H4.4" stroke="#e8b070" stroke-width="1.1"/><g stroke="#2a2a2a" stroke-width="3" stroke-linecap="round"><path d="M5.8 8L8.8 5"/></g><g stroke="#f0f0f0" stroke-width="1.7" stroke-linecap="round"><path d="M5.8 8L8.8 5"/></g><circle cx="5.6" cy="8.2" r="1.4" fill="#f0f0f0" stroke="#2a2a2a" stroke-width=".5"/></svg><span class="wl" style="top:3px;transform:translateY(0.1px) rotate(.05deg);left:14.2px">LocRotScale</span><svg class="a" style="left:74.3px;top:0.3px" width="10.4" height="10.4" viewBox="0 0 10 10"><path d="M1.5 1.5L8.5 8.5M8.5 1.5L1.5 8.5" stroke="#303030" stroke-width="2.7"/><path d="M1.9 1.9L8.1 8.1M8.1 1.9L1.9 8.1" stroke="#f4f4f4" stroke-width="1.5"/></svg></div>
<div class="w tool rm nl" style="left:704px;top:664px;width:14px;height:13px;"><svg class="a" style="left:1px;top:0.6px" width="10" height="10" viewBox="0 0 10 10"><g stroke="#2a2a2a" stroke-width="3.4" stroke-linecap="round"><path d="M3 7.4L7.6 2.8"/></g><circle cx="2.7" cy="7.5" r="2.3" fill="#2a2a2a"/><circle cx="7.8" cy="2.6" r="1.9" fill="#2a2a2a"/><g stroke="#f0f0f0" stroke-width="1.9" stroke-linecap="round"><path d="M3 7.4L7.6 2.8"/></g><circle cx="2.7" cy="7.5" r="1.7" fill="#f0f0f0"/><circle cx="7.8" cy="2.6" r="1.3" fill="#f0f0f0"/><circle cx="2.5" cy="7.7" r=".7" fill="#3a3a3a"/></svg></div>
<div class="w tool rm nl" style="left:718px;top:664px;width:13px;height:13px;clip-path:inset(0 6px 0 0)"><svg class="a" style="left:1px;top:0.6px" width="10" height="10" viewBox="0 0 10 10"><g stroke="#2a2a2a" stroke-width="3.4" stroke-linecap="round"><path d="M3 7.4L7.6 2.8"/></g><circle cx="2.7" cy="7.5" r="2.3" fill="#2a2a2a"/><circle cx="7.8" cy="2.6" r="1.9" fill="#2a2a2a"/><g stroke="#f0f0f0" stroke-width="1.9" stroke-linecap="round"><path d="M3 7.4L7.6 2.8"/></g><circle cx="2.7" cy="7.5" r="1.7" fill="#f0f0f0"/><circle cx="7.8" cy="2.6" r="1.3" fill="#f0f0f0"/><circle cx="2.5" cy="7.7" r=".7" fill="#3a3a3a"/></svg><svg class="a" style="left:0;top:0" width="10" height="11" viewBox="0 0 10 11"><path d="M1 0L8 11" stroke="#e03020" stroke-width="1"/></svg></div>
<svg class="a" style="left:878px;top:27px" width="273" height="273" viewBox="0 0 273 273">
<defs>
<filter id="grain" x="0" y="0" width="100%" height="100%" color-interpolation-filters="sRGB">
<feTurbulence type="fractalNoise" baseFrequency="0.5 0.03" numOctaves="3" seed="7" result="n"/>
<feColorMatrix in="n" type="matrix" values="0 0 0 0 0.50  0 0 0 0 0.37  0 0 0 0 0.26  1.6 1.0 0 0 -0.95"/>
</filter>
<filter id="blotd" x="0" y="0" width="100%" height="100%" color-interpolation-filters="sRGB">
<feTurbulence type="fractalNoise" baseFrequency="0.03 0.014" numOctaves="2" seed="11" result="n"/>
<feColorMatrix in="n" type="matrix" values="0 0 0 0 0.80  0 0 0 0 0.64  0 0 0 0 0.46  2.4 0 0 0 -1.05"/>
</filter>
<filter id="blotl" x="0" y="0" width="100%" height="100%" color-interpolation-filters="sRGB">
<feTurbulence type="fractalNoise" baseFrequency="0.035 0.016" numOctaves="2" seed="23" result="n"/>
<feColorMatrix in="n" type="matrix" values="0 0 0 0 0.97  0 0 0 0 0.92  0 0 0 0 0.84  0 2.6 0 0 -1.15"/>
</filter>
<linearGradient id="wg" x1="0" y1="0" x2="1" y2="0"><stop offset="0" stop-color="#eacfa4"/><stop offset=".22" stop-color="#eed5ad"/><stop offset=".5" stop-color="#efd7b0"/><stop offset=".8" stop-color="#edd3a9"/><stop offset="1" stop-color="#e9cc9f"/></linearGradient>
</defs>
<rect width="273" height="273" fill="url(#wg)"/>
<rect width="273" height="273" filter="url(#blotd)" opacity=".36"/>
<rect width="273" height="273" filter="url(#blotl)" opacity=".5"/>
<rect width="273" height="273" filter="url(#grain)" opacity=".2"/>
</svg>
<div class="a" style="left:877px;top:299px;width:2px;height:2px;background:#f09a20"></div>
<svg class="a" style="left:995px;top:144px" width="40" height="40" viewBox="0 0 40 40">
<path d="M20 3V14M20 26V37M3 20H14M26 20H37" stroke="#3a3a3a" stroke-width=".7" stroke-dasharray="2.2 1.2"/>
<circle cx="20" cy="20" r="5" fill="none" stroke="#f4f4f4" stroke-width=".9"/>
<circle cx="20" cy="20" r="5" fill="none" stroke="#d63a20" stroke-width=".9" stroke-dasharray="2.4 2.4"/>
</svg>
<div class="a" style="left:726px;top:316px;width:554px;height:17px;background:linear-gradient(#757575,#6c6c6c)"></div>
<div class="a" style="left:726px;top:315.2px;width:554px;height:1px;background:#242424"></div>
<div class="a" style="left:726px;top:333.2px;width:554px;height:1px;background:#3a3a3a"></div>
<div class="w menu ra" style="left:732px;top:319px;width:20px;height:13px;"><svg class="a" style="left:2.6px;top:0.6px" width="10" height="10" viewBox="0 0 10 10"><rect x=".4" y="1" width="9.2" height="8" fill="#e8c8a0" stroke="#3a3a3a" stroke-width=".4"/><rect x=".6" y="4.4" width="8.8" height="2.2" fill="#3a3c5c"/><rect x=".6" y="6.4" width="8.8" height="2.4" fill="#dfe4ec"/><rect x="3.6" y="2.4" width="2.2" height="1.4" fill="#f8f0e0"/><rect x=".6" y="3.6" width="2.8" height="1" fill="#a8506c"/></svg><svg class="a" style="left:13.3px;top:0.9px" width="4.6" height="9.6" viewBox="0 0 4.6 9.6"><path d="M2.3 0.3 L4.5 4 H0.1Z M2.3 9.3 L4.5 5.6 H0.1Z" fill="#b4b4b4"/></svg></div>
<div class="t" style="left:759.8px;top:322px;transform:translateY(0.3px) rotate(.05deg);">View</div>
<div class="t" style="left:790px;top:322px;transform:translateY(0.3px) rotate(.05deg);">Select</div>
<div class="t" style="left:824.4px;top:322px;transform:translateY(0.3px) rotate(.05deg);">Image</div>
<div class="t" style="left:858.5px;top:322px;transform:translateY(0.3px) rotate(.05deg);">UVs</div>
<div class="w menu rl" style="left:881px;top:319px;width:21px;height:13px;"><svg class="a" style="left:2.6px;top:0.6px" width="10" height="10" viewBox="0 0 10 10"><rect x="1" y="1" width="8" height="8" fill="#e8e2da" stroke="#4a4a4a" stroke-width=".5"/><rect x="1.4" y="4" width="7.2" height="1.6" fill="#d8b890"/><rect x="1.4" y="5.4" width="7.2" height="1.4" fill="#5a4a5a"/><rect x="1.4" y="6.8" width="7.2" height="1.8" fill="#5a68a8"/><path d="M1 1h2.4L1 3.4Z" fill="#f8f8f8" stroke="#4a4a4a" stroke-width=".3"/></svg><svg class="a" style="left:14.1px;top:0.9px" width="4.6" height="9.6" viewBox="0 0 4.6 9.6"><path d="M2.3 0.3 L4.5 4 H0.1Z M2.3 9.3 L4.5 5.6 H0.1Z" fill="#b4b4b4"/></svg></div>
<div class="w text rm nl" style="left:902px;top:319px;width:79px;height:13px;"><span class="wl" style="top:2px;transform:translateY(0.75px) rotate(.05deg);left:4.6px;letter-spacing:-.3px">WoodenChair_Diffus...</span></div>
<div class="w tool rm nl" style="left:981px;top:319px;width:16px;height:13px;"><span class="wl" style="top:2px;transform:translateY(0.75px) rotate(.05deg);left:5px">2</span></div>
<div class="w tool rm nl" style="left:997px;top:319px;width:14px;height:13px;"><span class="wl" style="top:2px;transform:translateY(0.75px) rotate(.05deg);left:4.6px">F</span></div>
<div class="w tool rm nl" style="left:1011px;top:319px;width:14px;height:13px;"><svg class="a" style="left:1.7px;top:0.3px" width="10.4" height="10.4" viewBox="0 0 10 10"><path d="M5 .8V9.2M.8 5H9.2" stroke="#303030" stroke-width="2.7"/><path d="M5 1.3V8.7M1.3 5H8.7" stroke="#f4f4f4" stroke-width="1.5"/></svg></div>
<div class="w tool rm nl" style="left:1025px;top:319px;width:14px;height:13px;"><svg class="a" style="left:1.4px;top:0.4px" width="10.5" height="10.5" viewBox="0 0 10 10"><path d="M1 3h3l1-1.4h3.2V9H1Z" fill="#e8c49a" stroke="#6a5030" stroke-width=".5"/><path d="M2 1h4v4H2Z" fill="#f4f4f4" stroke="#777" stroke-width=".4"/><path d="M1 5h7.4V9H1Z" fill="#dcae7a" stroke="#6a5030" stroke-width=".4"/></svg></div>
<div class="w tool rr nl" style="left:1039px;top:319px;width:12px;height:13px;"><svg class="a" style="left:0.9px;top:0.3px" width="10.4" height="10.4" viewBox="0 0 10 10"><path d="M1.5 1.5L8.5 8.5M8.5 1.5L1.5 8.5" stroke="#303030" stroke-width="2.7"/><path d="M1.9 1.9L8.1 8.1M8.1 1.9L1.9 8.1" stroke="#f4f4f4" stroke-width="1.5"/></svg></div>
<div class="w tool ra" style="left:1055px;top:319px;width:13px;height:13px;"><svg class="a" style="left:1px;top:0.6px" width="10" height="10" viewBox="0 0 10 10"><path d="M.8 9.2L3.8 6.2" stroke="#e0e0e0" stroke-width="1"/><g stroke="#333" stroke-width="2.8" stroke-linecap="round"><path d="M4.4 5.6L7.4 2.6"/><path d="M2.8 4L6 7.2"/><path d="M6.4 1.4L8.6 3.6"/></g><g stroke="#e6e6e6" stroke-width="1.8" stroke-linecap="round"><path d="M4.4 5.6L7.4 2.6"/><path d="M2.8 4L6 7.2" stroke-width="1.3"/><path d="M6.4 1.4L8.6 3.6" stroke-width="1.6"/></g></svg></div>
<div class="w menu ra" style="left:1072px;top:319px;width:44px;height:13px;"><svg class="a" style="left:2.6px;top:0.6px" width="10" height="10" viewBox="0 0 10 10"><rect x="1" y="1" width="8" height="8" fill="#e8e2da" stroke="#4a4a4a" stroke-width=".5"/><rect x="1.4" y="4.6" width="7.2" height="1.8" fill="#c0566a"/><rect x="1.4" y="6.4" width="7.2" height="2.2" fill="#48549a"/><rect x="1.4" y="1.4" width="2" height="2" fill="#e0a860"/></svg><span class="wl" style="top:2px;transform:translateY(0.75px) rotate(.05deg);left:15.4px">View</span><svg class="a" style="left:36.3px;top:0.9px" width="4.6" height="9.6" viewBox="0 0 4.6 9.6"><path d="M2.3 0.3 L4.5 4 H0.1Z M2.3 9.3 L4.5 5.6 H0.1Z" fill="#bcbcbc"/></svg></div>
<div class="w menu ra" style="left:1119px;top:319px;width:24px;height:13px;"><svg class="a" style="left:2.6px;top:0.6px" width="10" height="10" viewBox="0 0 10 10"><circle cx="3.6" cy="3.4" r="2.9" fill="#e8e8e8" stroke="#555" stroke-width=".4"/><circle cx="6.6" cy="6.6" r="2.9" fill="#e8e8e8" stroke="#555" stroke-width=".4"/><rect x="4" y="4" width="2.2" height="2.2" fill="#2f6fdc" stroke="#fff" stroke-width=".4"/></svg><svg class="a" style="left:16.1px;top:0.9px" width="4.6" height="9.6" viewBox="0 0 4.6 9.6"><path d="M2.3 0.3 L4.5 4 H0.1Z M2.3 9.3 L4.5 5.6 H0.1Z" fill="#bcbcbc"/></svg></div>
<div class="w togl ra" style="left:1146px;top:319px;width:13px;height:13px;"><svg class="a" style="left:0.8px;top:0.4px" width="10.5" height="10.5" viewBox="0 0 10 10"><path d="M1 2.4L4 1.4l2 1v3.4L3.6 7 1 6Z" fill="#d8d8d8" stroke="#555" stroke-width=".4"/><rect x=".4" y="1.6" width="1.6" height="1.6" fill="#f09030"/><rect x=".4" y="5.2" width="1.6" height="1.6" fill="#f09030"/><path d="M5 3.4L5 9.4L6.4 8L7.4 9.8L8.4 9.2L7.4 7.6L9.2 7.4Z" fill="#fff" stroke="#222" stroke-width=".5"/></svg></div>
<div class="w radsel rl" style="left:1163px;top:319px;width:13px;height:13px;"><svg class="a" style="left:0.8px;top:0.6px" width="10" height="10" viewBox="0 0 10 10"><rect x="1.6" y="1.6" width="6.8" height="6.8" fill="none" stroke="#1c3f86" stroke-width=".6"/><g fill="#f6a040" stroke="#7a3a00" stroke-width=".35"><rect x=".6" y=".6" width="2.2" height="2.2"/><rect x="7.2" y=".6" width="2.2" height="2.2"/><rect x=".6" y="7.2" width="2.2" height="2.2"/><rect x="7.2" y="7.2" width="2.2" height="2.2"/><rect x="3.9" y="3.9" width="2.2" height="2.2"/></g></svg></div>
<div class="w menu rm nl" style="left:1176px;top:319px;width:14px;height:13px;"><svg class="a" style="left:1px;top:0.6px" width="10" height="10" viewBox="0 0 10 10"><rect x="1" y="1.4" width="8" height="7.4" fill="#6a5f55" opacity=".6"/><path d="M2.2 1V9M5 1V9M7.8 1V9" stroke="#a87448" stroke-width=".9"/></svg></div>
<div class="w menu rm nl" style="left:1190px;top:319px;width:13px;height:13px;"><svg class="a" style="left:1px;top:0.6px" width="10" height="10" viewBox="0 0 10 10"><rect x="1" y="1" width="8" height="8" fill="#6a6a6a"/><rect x="1.4" y="1.4" width="4.4" height="4.4" fill="#c08a50"/><path d="M1 6H9M6 1V9" stroke="#444" stroke-width=".5"/></svg></div>
<div class="w menu rr nl" style="left:1203px;top:319px;width:14px;height:13px;"><svg class="a" style="left:1px;top:0.6px" width="10" height="10" viewBox="0 0 10 10"><rect x="1" y="1.2" width="3" height="7.6" fill="#777"/><rect x="5" y="1" width="4" height="8" fill="#b88250" stroke="#5a3a1a" stroke-width=".4"/><rect x="2" y="3" width="1" height="1" fill="#999"/><rect x="2" y="6" width="1" height="1" fill="#999"/></svg></div>
<div class="w menu ra" style="left:1220px;top:319px;width:23px;height:13px;"><svg class="a" style="left:2.4px;top:0.6px" width="10" height="10" viewBox="0 0 10 10"><rect x="1.6" y="1.6" width="6.8" height="6.8" fill="none" stroke="#aaa" stroke-width=".6" stroke-dasharray="1 1"/><path d="M4 7V4.4a1 1 0 0 1 2 0V7Z" fill="#fff" stroke="#222" stroke-width=".4"/></svg><svg class="a" style="left:15.9px;top:0.9px" width="4.6" height="9.6" viewBox="0 0 4.6 9.6"><path d="M2.3 0.3 L4.5 4 H0.1Z M2.3 9.3 L4.5 5.6 H0.1Z" fill="#bcbcbc"/></svg></div>
<div class="w menu ra" style="left:1247px;top:319px;width:23px;height:13px;"><svg class="a" style="left:3px;top:1px" width="9" height="9" viewBox="0 0 10 10"><circle cx="5" cy="5" r="3.6" fill="#8a8a8a" stroke="#9c9c9c" stroke-width=".7"/><circle cx="5" cy="5" r="1.6" fill="#7a7a7a"/></svg><svg class="a" style="left:16.1px;top:0.9px" width="4.6" height="9.6" viewBox="0 0 4.6 9.6"><path d="M2.3 0.3 L4.5 4 H0.1Z M2.3 9.3 L4.5 5.6 H0.1Z" fill="#bcbcbc"/></svg></div>
<div class="w togl rl" style="left:1274px;top:319px;width:16px;height:13px;"><svg class="a" style="left:1.4px;top:0.6px" width="10" height="10" viewBox="0 0 10 10"><path d="M1.4 8.6A4 4 0 0 1 8 3" fill="none" stroke="#d8d8d8" stroke-width="1.8"/><path d="M1.4 8.6A4 4 0 0 1 8 3" fill="none" stroke="#888" stroke-width=".6"/></svg></div>
<div class="a" style="left:726px;top:334px;width:554px;height:16.8px;background:#686868"></div><div class="a" style="left:726px;top:350.1px;width:554px;height:.8px;background:#616161"></div>
<div class="a" style="left:726px;top:350.9px;width:554px;height:329px;background:#727272"></div><div class="a" style="left:726px;top:351.2px;width:554px;height:1.2px;background:#7a7a7a"></div>
<div class="w menu ra" style="left:732px;top:336px;width:20px;height:13px;"><svg class="a" style="left:2.8px;top:0.6px" width="10" height="10" viewBox="0 0 10 10"><rect x=".6" y="1.4" width="8.8" height="2.8" rx=".8" fill="#4a4a4a" stroke="#d0d0d0" stroke-width=".4"/><rect x="5.4" y="1.9" width="3.4" height="1.8" fill="#e6e6e6"/><rect x=".6" y="5.6" width="8.8" height="3" rx=".8" fill="#e6e6e6" stroke="#2e2e2e" stroke-width=".4"/><path d="M2.4 6.3V7.9M7.2 6.3V7.9" stroke="#2e2e2e" stroke-width=".7"/></svg><svg class="a" style="left:13.7px;top:0.9px" width="4.6" height="9.6" viewBox="0 0 4.6 9.6"><path d="M2.3 0.3 L4.5 4 H0.1Z M2.3 9.3 L4.5 5.6 H0.1Z" fill="#b4b4b4"/></svg></div>
<div class="w menu rl" style="left:758px;top:336px;width:13px;height:13px;"><svg class="a" style="left:1.2px;top:0.6px" width="10" height="10" viewBox="0 0 10 10"><rect x="1" y="2.8" width="8" height="5.8" fill="#7c7c7c" stroke="#2e2e2e" stroke-width=".5"/><rect x="1.6" y="1.6" width="3" height="1.6" fill="#9a9a9a"/><circle cx="6" cy="5.9" r="2.1" fill="#2c2c2c" stroke="#b0b0b0" stroke-width=".5"/><circle cx="6" cy="5.9" r=".9" fill="#b85038"/></svg></div>
<div class="w menu rm nl" style="left:771px;top:336px;width:14px;height:13px;"><svg class="a" style="left:1.2px;top:0.6px" width="10" height="10" viewBox="0 0 10 10"><rect x="3.4" y="3.4" width="5.8" height="5.8" fill="#bcbcbc" stroke="#4a4a4a" stroke-width=".4"/><rect x="2.2" y="2.2" width="5.8" height="5.8" fill="#d0d0d0" stroke="#4a4a4a" stroke-width=".4"/><rect x="1" y="1" width="5.8" height="5.8" fill="#dedede" stroke="#4a4a4a" stroke-width=".4"/><rect x="2.2" y="1.8" width="3.2" height="3" fill="#5068b0"/></svg></div>
<div class="w menu rm nl" style="left:785px;top:336px;width:13px;height:13px;"><svg class="a" style="left:1.2px;top:0.6px" width="10" height="10" viewBox="0 0 10 10"><circle cx="3.6" cy="6.8" r="2.5" fill="#d2d2d2" stroke="#4a4a4a" stroke-width=".4"/><rect x="5.4" y="2" width="3" height="5.2" fill="#5f82c4" stroke="#2c4478" stroke-width=".4"/><rect x="1.8" y="1" width="2.2" height="2.4" fill="#d89a58"/><circle cx="6.2" cy="7.6" r="1.5" fill="#a8a8a8"/></svg></div>
<div class="w menu rm nl" style="left:798px;top:336px;width:13px;height:13px;"><svg class="a" style="left:1.2px;top:0.6px" width="10" height="10" viewBox="0 0 10 10"><circle cx="5" cy="5" r="4" fill="#6c7cac" stroke="#2e3854" stroke-width=".5"/><path d="M2.4 3.4C3.6 2.6 4.6 3.6 4.2 4.8C3.8 6 2.6 6.2 2 5.4ZM5.8 5.4C7 4.8 8 5.8 7.4 7C6.6 7.8 5.6 7 5.8 5.4Z" fill="#a8b2cc"/><circle cx="3.8" cy="3.6" r="1.6" fill="#c8d0e4" opacity=".5"/></svg></div>
<div class="w menu rm nl" style="left:811px;top:336px;width:14px;height:13px;"><svg class="a" style="left:1.2px;top:0.6px" width="10" height="10" viewBox="0 0 10 10"><path d="M1.2 3L5 1.4l3.8 1.6v4.4L5 9 1.2 7.4Z" fill="#d8a868" stroke="#5a3c14" stroke-width=".5"/><path d="M5 4.6V9L8.8 7.4V3Z" fill="#b08040"/><path d="M1.2 3L5 4.6L8.8 3L5 1.4Z" fill="#ecc898"/></svg></div>
<div class="w menu rm nl" style="left:825px;top:336px;width:13px;height:13px;"><svg class="a" style="left:1.2px;top:0.6px" width="10" height="10" viewBox="0 0 10 10"><ellipse cx="3.4" cy="6.2" rx="2.4" ry="1.6" transform="rotate(-35 3.4 6.2)" fill="none" stroke="#b4b4b4" stroke-width=".9"/><ellipse cx="6.6" cy="3.8" rx="2.4" ry="1.6" transform="rotate(-35 6.6 3.8)" fill="none" stroke="#b4b4b4" stroke-width=".9"/></svg></div>
<div class="w menu rm nl" style="left:838px;top:336px;width:14px;height:13px;"><svg class="a" style="left:1.2px;top:0.6px" width="10" height="10" viewBox="0 0 10 10"><path d="M1.6 8.6L5.6 4.6" stroke="#6a8ac8" stroke-width="1.5"/><path d="M5 2.6A2.3 2.3 0 0 1 8.4 1.8L7 3.2L7.8 4L9 2.6A2.3 2.3 0 0 1 5.8 5Z" fill="#6a8ac8" stroke="#2c4478" stroke-width=".4"/></svg></div>
<div class="w menu rm nl" style="left:852px;top:336px;width:13px;height:13px;"><svg class="a" style="left:1.2px;top:0.6px" width="10" height="10" viewBox="0 0 10 10"><path d="M1.6 2.2L8.4 2.2L5 8.6Z" fill="none" stroke="#c4c4c4" stroke-width=".6"/><g fill="#d8d8d8"><rect x=".9" y="1.5" width="1.3" height="1.3"/><rect x="7.8" y="1.5" width="1.3" height="1.3"/><rect x="4.35" y="8" width="1.3" height="1.3"/></g></svg></div>
<div class="w radsel rm nl" style="left:865px;top:336px;width:13px;height:13px;"><svg class="a" style="left:1.2px;top:0.6px" width="10" height="10" viewBox="0 0 10 10"><circle cx="5" cy="5" r="4.2" fill="#c4c4c4" stroke="#2a2a2a" stroke-width=".5"/><path d="M5 5L8.9 3.4A4.2 4.2 0 0 1 6.6 8.9Z" fill="#a04a44"/><path d="M5 5L6.6 8.9A4.2 4.2 0 0 1 2 8Z" fill="#707070"/><circle cx="3.8" cy="3.6" r="2" fill="#f4f4f4" opacity=".9"/></svg></div>
<div class="w menu rm nl" style="left:878px;top:336px;width:14px;height:13px;"><svg class="a" style="left:1.2px;top:0.6px" width="10" height="10" viewBox="0 0 10 10"><rect x="1" y="1" width="8" height="8" fill="#c8beb6" stroke="#4a4a4a" stroke-width=".4"/><g fill="#a04434"><rect x="1" y="1" width="2" height="2"/><rect x="5" y="1" width="2" height="2"/><rect x="3" y="3" width="2" height="2"/><rect x="7" y="3" width="2" height="2"/><rect x="1" y="5" width="2" height="2"/><rect x="5" y="5" width="2" height="2"/><rect x="3" y="7" width="2" height="2"/><rect x="7" y="7" width="2" height="2"/></g></svg></div>
<div class="w menu rm nl" style="left:892px;top:336px;width:13px;height:13px;"><svg class="a" style="left:1.2px;top:0.6px" width="10" height="10" viewBox="0 0 10 10"><path d="M5 .8V9.2M.8 5H9.2M2 2L8 8M8 2L2 8" stroke="#b87848" stroke-width=".45"/><g fill="#d8b890"><rect x="1.4" y="1.4" width="1.3" height="1.3"/><rect x="7.3" y="1.4" width="1.3" height="1.3"/><rect x="1.4" y="7.3" width="1.3" height="1.3"/><rect x="7.3" y="7.3" width="1.3" height="1.3"/><rect x="4.35" y="4.35" width="1.3" height="1.3"/><rect x="4.35" y="1" width="1.3" height="1.3"/><rect x="4.35" y="7.7" width="1.3" height="1.3"/><rect x="1" y="4.35" width="1.3" height="1.3"/><rect x="7.7" y="4.35" width="1.3" height="1.3"/></g></svg></div>
<div class="w menu rr nl" style="left:905px;top:336px;width:14px;height:13px;"><svg class="a" style="left:1.2px;top:0.6px" width="10" height="10" viewBox="0 0 10 10"><path d="M1.8 5.2L4.2 8L8.2 3" fill="none" stroke="#5474b4" stroke-width="1.5"/><circle cx="7.8" cy="2.6" r="1.6" fill="#bcbcbc"/></svg></div>
<svg class="a" style="left:732.6px;top:358.4px" width="10.5" height="10.5" viewBox="0 0 10 10"><path d="M.8 9.2L3.8 6.2" stroke="#e0e0e0" stroke-width="1"/><g stroke="#333" stroke-width="2.8" stroke-linecap="round"><path d="M4.4 5.6L7.4 2.6"/><path d="M2.8 4L6 7.2"/><path d="M6.4 1.4L8.6 3.6"/></g><g stroke="#e6e6e6" stroke-width="1.8" stroke-linecap="round"><path d="M4.4 5.6L7.4 2.6"/><path d="M2.8 4L6 7.2" stroke-width="1.3"/><path d="M6.4 1.4L8.6 3.6" stroke-width="1.6"/></g></svg>
<svg class="a" style="left:748px;top:358.4px" width="10.5" height="10.5" viewBox="0 0 10 10"><circle cx="3.6" cy="6.8" r="2.5" fill="#d2d2d2" stroke="#4a4a4a" stroke-width=".4"/><rect x="5.4" y="2" width="3" height="5.2" fill="#5f82c4" stroke="#2c4478" stroke-width=".4"/><rect x="1.8" y="1" width="2.2" height="2.4" fill="#d89a58"/><circle cx="6.2" cy="7.6" r="1.5" fill="#a8a8a8"/></svg>
<svg class="a" style="left:762.4px;top:361.6px" width="3" height="4" viewBox="0 0 3 4"><path d="M0.2 0L3 2L0.2 4Z" fill="#2c2c2c"/></svg>
<svg class="a" style="left:775.4px;top:358.4px" width="10.5" height="10.5" viewBox="0 0 10 10"><path d="M1.2 3L5 1.4l3.8 1.6v4.4L5 9 1.2 7.4Z" fill="#d8a868" stroke="#5a3c14" stroke-width=".5"/><path d="M5 4.6V9L8.8 7.4V3Z" fill="#b08040"/><path d="M1.2 3L5 4.6L8.8 3L5 1.4Z" fill="#ecc898"/></svg>
<div class="t" style="left:788.3px;top:360px;transform:translateY(0.2px) rotate(.05deg);">Cube</div>
<svg class="a" style="left:815.8px;top:361.6px" width="3" height="4" viewBox="0 0 3 4"><path d="M0.2 0L3 2L0.2 4Z" fill="#2c2c2c"/></svg>
<svg class="a" style="left:828.4px;top:358.4px" width="10.5" height="10.5" viewBox="0 0 10 10"><circle cx="5" cy="5" r="4.2" fill="#c4c4c4" stroke="#2a2a2a" stroke-width=".5"/><path d="M5 5L8.9 3.4A4.2 4.2 0 0 1 6.6 8.9Z" fill="#a04a44"/><path d="M5 5L6.6 8.9A4.2 4.2 0 0 1 2 8Z" fill="#707070"/><circle cx="3.8" cy="3.6" r="2" fill="#f4f4f4" opacity=".9"/></svg>
<div class="t" style="left:841.9px;top:360px;transform:translateY(0.2px) rotate(.05deg);">Material</div>
<div class="a" style="left:732px;top:380.8px;width:525.5px;height:29px;background:#808080;border:1px solid rgba(25,25,25,.6);border-radius:3.5px"></div>
<div class="a" style="left:736px;top:387px;width:518px;height:12.2px;background:#5680c2"></div>
<svg class="a" style="left:737.6px;top:387.8px" width="10.6" height="10.6" viewBox="0 0 10 10"><circle cx="5" cy="5" r="4.2" fill="#d4d4d4" stroke="#4a4a4a" stroke-width=".4"/><circle cx="4" cy="3.8" r="2.6" fill="#f6f6f6"/></svg>
<div class="t" style="left:751.3px;top:389px;transform:translateY(0.7px) rotate(.05deg);color:#fff;">Material</div>
<svg class="a" style="left:738.6px;top:400.4px" width="5.4" height="5.4" viewBox="0 0 6 6"><circle cx="3" cy="3" r="2.5" fill="#8c8c8c" stroke="#383838" stroke-width=".8"/><path d="M3 1.5V4.5M1.5 3H4.5" stroke="#303030" stroke-width=".7"/></svg>
<div class="a" style="left:994px;top:401.6px;width:11px;height:.7px;background:#999"></div><div class="a" style="left:994px;top:403.3px;width:11px;height:.7px;background:#999"></div>
<div class="w tool rt" style="left:1264px;top:382px;width:12px;height:13px;"><svg class="a" style="left:1.1px;top:0.5px" width="10.4" height="10.4" viewBox="0 0 10 10"><path d="M5 .8V9.2M.8 5H9.2" stroke="#303030" stroke-width="2.7"/><path d="M5 1.3V8.7M1.3 5H8.7" stroke="#f4f4f4" stroke-width="1.5"/></svg></div>
<div class="w tool rm" style="left:1264px;top:395px;width:12px;height:13px;border-top-width:0"><svg class="a" style="left:1.8px;top:1.2px" width="9" height="9" viewBox="0 0 10 10"><path d="M1.2 5H8.8" stroke="#2c2c2c" stroke-width="2.6"/><path d="M1.6 5H8.4" stroke="#f2f2f2" stroke-width="1.3"/></svg></div>
<div class="w menu rb" style="left:1264px;top:408px;width:12px;height:13px;border-top-width:0"><svg class="a" style="left:2.4px;top:2.4px" width="7" height="7" viewBox="0 0 7 7"><path d="M.6 .8H6.4L4.2 6.4Z" fill="#e8e8e8" stroke="#111" stroke-width=".5"/></svg></div>
<div class="w tool rl" style="left:732px;top:425px;width:182px;height:13px;"><span class="wl" style="top:2px;transform:translateY(0.8px) rotate(.05deg);left:0;right:0;text-align:center">Assign</span></div>
<div class="w tool rm nl" style="left:914px;top:425px;width:181px;height:13px;"><span class="wl" style="top:2px;transform:translateY(0.8px) rotate(.05deg);left:0;right:0;text-align:center">Select</span></div>
<div class="w tool rr nl" style="left:1095px;top:425px;width:182px;height:13px;"><span class="wl" style="top:2px;transform:translateY(0.8px) rotate(.05deg);left:0;right:0;text-align:center">Deselect</span></div>
<div class="w menu rl" style="left:732px;top:441px;width:20px;height:14px;"><svg class="a" style="left:2.6px;top:0.6px" width="10" height="10" viewBox="0 0 10 10"><circle cx="5" cy="5" r="4.2" fill="#c4c4c4" stroke="#2a2a2a" stroke-width=".5"/><path d="M5 5L8.9 3.4A4.2 4.2 0 0 1 6.6 8.9Z" fill="#a04a44"/><path d="M5 5L6.6 8.9A4.2 4.2 0 0 1 2 8Z" fill="#707070"/><circle cx="3.8" cy="3.6" r="2" fill="#f4f4f4" opacity=".9"/></svg><svg class="a" style="left:13.7px;top:1px" width="4.6" height="9.6" viewBox="0 0 4.6 9.6"><path d="M2.3 0.3 L4.5 4 H0.1Z M2.3 9.3 L4.5 5.6 H0.1Z" fill="#bcbcbc"/></svg></div>
<div class="w text rm nl" style="left:752px;top:441px;width:290px;height:14px;"><span class="wl" style="top:3px;transform:translateY(0.3px) rotate(.05deg);left:5.4px">Material</span></div>
<div class="w tool rm nl" style="left:1042px;top:441px;width:12px;height:14px;"><span class="wl" style="top:3px;transform:translateY(0.3px) rotate(.05deg);left:4.2px">F</span></div>
<div class="w tool rm nl" style="left:1054px;top:441px;width:14px;height:14px;"><svg class="a" style="left:1.7px;top:0.4px" width="10.4" height="10.4" viewBox="0 0 10 10"><path d="M5 .8V9.2M.8 5H9.2" stroke="#303030" stroke-width="2.7"/><path d="M5 1.3V8.7M1.3 5H8.7" stroke="#f4f4f4" stroke-width="1.5"/></svg></div>
<div class="w tool rr nl" style="left:1068px;top:441px;width:14px;height:14px;"><svg class="a" style="left:1.1px;top:0.4px" width="10.4" height="10.4" viewBox="0 0 10 10"><path d="M1.5 1.5L8.5 8.5M8.5 1.5L1.5 8.5" stroke="#303030" stroke-width="2.7"/><path d="M1.9 1.9L8.1 8.1M8.1 1.9L1.9 8.1" stroke="#f4f4f4" stroke-width="1.5"/></svg></div>
<div class="w menu ra" style="left:1087px;top:441px;width:190px;height:14px;"><span class="wl" style="top:3px;transform:translateY(0.3px) rotate(.05deg);left:5.6px">Data</span><svg class="a" style="left:182.1px;top:1px" width="4.6" height="9.6" viewBox="0 0 4.6 9.6"><path d="M2.3 0.3 L4.5 4 H0.1Z M2.3 9.3 L4.5 5.6 H0.1Z" fill="#bcbcbc"/></svg></div>
<div class="ph" style="top:459.4px"></div>
<svg class="a" style="left:735.4px;top:464.9px" width="5.8" height="6.4" viewBox="0 0 5.4 6"><path d="M.3 .2V5.8L5.2 3Z" fill="#161616"/></svg>
<div class="t" style="left:743.4px;top:464px;transform:translateY(0.8px) rotate(.05deg);font-size:7.7px">Custom Properties</div>
<svg class="a" style="left:1267.8px;top:465.9px" width="8" height="4" viewBox="0 0 8 4"><g fill="#8a8a8a"><rect x="0" y="0.0" width=".9" height=".8"/><rect x="0" y="1.5" width=".9" height=".8"/><rect x="0" y="3.0" width=".9" height=".8"/><rect x="2" y="0.0" width=".9" height=".8"/><rect x="2" y="1.5" width=".9" height=".8"/><rect x="2" y="3.0" width=".9" height=".8"/><rect x="4" y="0.0" width=".9" height=".8"/><rect x="4" y="1.5" width=".9" height=".8"/><rect x="4" y="3.0" width=".9" height=".8"/><rect x="6" y="0.0" width=".9" height=".8"/><rect x="6" y="1.5" width=".9" height=".8"/><rect x="6" y="3.0" width=".9" height=".8"/></g></svg>
<div class="ph" style="top:475.2px"></div>
<svg class="a" style="left:735.4px;top:481.1px" width="5.8" height="6.4" viewBox="0 0 5.4 6"><path d="M.3 .2V5.8L5.2 3Z" fill="#161616"/></svg>
<div class="t" style="left:743.4px;top:480px;transform:translateY(1px) rotate(.05deg);font-size:7.7px">Preview</div>
<svg class="a" style="left:1267.8px;top:482.1px" width="8" height="4" viewBox="0 0 8 4"><g fill="#8a8a8a"><rect x="0" y="0.0" width=".9" height=".8"/><rect x="0" y="1.5" width=".9" height=".8"/><rect x="0" y="3.0" width=".9" height=".8"/><rect x="2" y="0.0" width=".9" height=".8"/><rect x="2" y="1.5" width=".9" height=".8"/><rect x="2" y="3.0" width=".9" height=".8"/><rect x="4" y="0.0" width=".9" height=".8"/><rect x="4" y="1.5" width=".9" height=".8"/><rect x="4" y="3.0" width=".9" height=".8"/><rect x="6" y="0.0" width=".9" height=".8"/><rect x="6" y="1.5" width=".9" height=".8"/><rect x="6" y="3.0" width=".9" height=".8"/></g></svg>
<div class="ph" style="top:491.2px"></div>
<svg class="a" style="left:735px;top:497.2px" width="6.4" height="5.8" viewBox="0 0 6 5.4"><path d="M.2 .3H5.8L3 5.2Z" fill="#161616"/></svg>
<div class="t" style="left:743.4px;top:496px;transform:translateY(0.9px) rotate(.05deg);font-size:7.7px">Surface</div>
<svg class="a" style="left:1267.8px;top:498px" width="8" height="4" viewBox="0 0 8 4"><g fill="#8a8a8a"><rect x="0" y="0.0" width=".9" height=".8"/><rect x="0" y="1.5" width=".9" height=".8"/><rect x="0" y="3.0" width=".9" height=".8"/><rect x="2" y="0.0" width=".9" height=".8"/><rect x="2" y="1.5" width=".9" height=".8"/><rect x="2" y="3.0" width=".9" height=".8"/><rect x="4" y="0.0" width=".9" height=".8"/><rect x="4" y="1.5" width=".9" height=".8"/><rect x="4" y="3.0" width=".9" height=".8"/><rect x="6" y="0.0" width=".9" height=".8"/><rect x="6" y="1.5" width=".9" height=".8"/><rect x="6" y="3.0" width=".9" height=".8"/></g></svg>
<div class="t" style="left:737.5px;top:517px;transform:translateY(0.2px) rotate(.05deg);">Surface:</div>
<div class="w menu ra" style="left:926px;top:514px;width:351px;height:13px;"><span class="wl" style="top:2px;transform:translateY(0.9px) rotate(.05deg);left:5.4px">Diffuse BSDF</span><svg class="a" style="left:339.5px;top:3.6px" width="4" height="4" viewBox="0 0 4 4"><circle cx="2" cy="2" r="1.5" fill="#2a2a2a" stroke="#7c7c7c" stroke-width=".7"/></svg></div>
<div class="t" style="left:743.6px;top:541px;transform:translateY(0.1px) rotate(.05deg);">Color:</div>
<div class="w rl" style="left:926px;top:538px;width:336px;height:13px;background:#e7e7e7;border-color:rgba(40,40,40,.45)"></div>
<div class="w menu rr nl" style="left:1262px;top:538px;width:15px;height:13px;"><svg class="a" style="left:4.4px;top:3.6px" width="4" height="4" viewBox="0 0 4 4"><circle cx="2" cy="2" r="1.5" fill="#2a2a2a" stroke="#7c7c7c" stroke-width=".7"/></svg></div>
<div class="t" style="left:743.6px;top:557px;transform:translateY(0.7px) rotate(.05deg);">Roughness:</div>
<div class="w num pl" style="left:926px;top:555px;width:336px;height:12px;border-radius:6.3px 0 0 6.3px"><span style="position:absolute;left:0;top:0;bottom:0;width:6px;background:#7d7d7d"></span><span class="wl" style="top:2px;transform:translateY(0.4px) rotate(.05deg);left:auto;right:9.4px">0.000</span></div>
<div class="w menu rr nl" style="left:1262px;top:555px;width:15px;height:12px;"><svg class="a" style="left:4.4px;top:3.4px" width="4" height="4" viewBox="0 0 4 4"><circle cx="2" cy="2" r="1.5" fill="#2a2a2a" stroke="#7c7c7c" stroke-width=".7"/></svg></div>
<div class="t" style="left:743.6px;top:574px;transform:translateY(0.6px) rotate(.05deg);">Normal:</div>
<div class="w menu ra" style="left:926px;top:571px;width:351px;height:13px;"><span class="wl" style="top:3px;transform:translateY(0.25px) rotate(.05deg);left:5.4px">Default</span><svg class="a" style="left:339.5px;top:3.6px" width="4" height="4" viewBox="0 0 4 4"><circle cx="2" cy="2" r="1.5" fill="#2a2a2a" stroke="#7c7c7c" stroke-width=".7"/></svg></div>
<div class="ph" style="top:589.2px"></div>
<svg class="a" style="left:735.4px;top:594.8px" width="5.8" height="6.4" viewBox="0 0 5.4 6"><path d="M.3 .2V5.8L5.2 3Z" fill="#161616"/></svg>
<div class="t" style="left:743.4px;top:594px;transform:translateY(0.7px) rotate(.05deg);font-size:7.7px">Volume</div>
<svg class="a" style="left:1267.8px;top:595.8px" width="8" height="4" viewBox="0 0 8 4"><g fill="#8a8a8a"><rect x="0" y="0.0" width=".9" height=".8"/><rect x="0" y="1.5" width=".9" height=".8"/><rect x="0" y="3.0" width=".9" height=".8"/><rect x="2" y="0.0" width=".9" height=".8"/><rect x="2" y="1.5" width=".9" height=".8"/><rect x="2" y="3.0" width=".9" height=".8"/><rect x="4" y="0.0" width=".9" height=".8"/><rect x="4" y="1.5" width=".9" height=".8"/><rect x="4" y="3.0" width=".9" height=".8"/><rect x="6" y="0.0" width=".9" height=".8"/><rect x="6" y="1.5" width=".9" height=".8"/><rect x="6" y="3.0" width=".9" height=".8"/></g></svg>
<div class="ph" style="top:605.1px"></div>
<svg class="a" style="left:735px;top:611.2px" width="6.4" height="5.8" viewBox="0 0 6 5.4"><path d="M.2 .3H5.8L3 5.2Z" fill="#161616"/></svg>
<div class="t" style="left:743.4px;top:610px;transform:translateY(0.9px) rotate(.05deg);font-size:7.7px">Displacement</div>
<svg class="a" style="left:1267.8px;top:612px" width="8" height="4" viewBox="0 0 8 4"><g fill="#8a8a8a"><rect x="0" y="0.0" width=".9" height=".8"/><rect x="0" y="1.5" width=".9" height=".8"/><rect x="0" y="3.0" width=".9" height=".8"/><rect x="2" y="0.0" width=".9" height=".8"/><rect x="2" y="1.5" width=".9" height=".8"/><rect x="2" y="3.0" width=".9" height=".8"/><rect x="4" y="0.0" width=".9" height=".8"/><rect x="4" y="1.5" width=".9" height=".8"/><rect x="4" y="3.0" width=".9" height=".8"/><rect x="6" y="0.0" width=".9" height=".8"/><rect x="6" y="1.5" width=".9" height=".8"/><rect x="6" y="3.0" width=".9" height=".8"/></g></svg>
<div class="t" style="left:737.5px;top:630px;transform:translateY(0.9px) rotate(.05deg);">Displacement:</div>
<div class="w menu ra" style="left:926px;top:628px;width:351px;height:13px;"><span class="wl" style="top:2px;transform:translateY(0.45px) rotate(.05deg);left:5.4px">Default</span><svg class="a" style="left:339.5px;top:3.6px" width="4" height="4" viewBox="0 0 4 4"><circle cx="2" cy="2" r="1.5" fill="#2a2a2a" stroke="#7c7c7c" stroke-width=".7"/></svg></div>
<div class="ph" style="top:644.9px"></div>
<svg class="a" style="left:735.4px;top:651.1px" width="5.8" height="6.4" viewBox="0 0 5.4 6"><path d="M.3 .2V5.8L5.2 3Z" fill="#161616"/></svg>
<div class="t" style="left:743.4px;top:651px;transform:translateY(0px) rotate(.05deg);font-size:7.7px">Settings</div>
<svg class="a" style="left:1267.8px;top:652.1px" width="8" height="4" viewBox="0 0 8 4"><g fill="#8a8a8a"><rect x="0" y="0.0" width=".9" height=".8"/><rect x="0" y="1.5" width=".9" height=".8"/><rect x="0" y="3.0" width=".9" height=".8"/><rect x="2" y="0.0" width=".9" height=".8"/><rect x="2" y="1.5" width=".9" height=".8"/><rect x="2" y="3.0" width=".9" height=".8"/><rect x="4" y="0.0" width=".9" height=".8"/><rect x="4" y="1.5" width=".9" height=".8"/><rect x="4" y="3.0" width=".9" height=".8"/><rect x="6" y="0.0" width=".9" height=".8"/><rect x="6" y="1.5" width=".9" height=".8"/><rect x="6" y="3.0" width=".9" height=".8"/></g></svg>
<svg class="a" style="left:716px;top:16px" width="9" height="9" viewBox="0 0 9 9"><path d="M0 1L8 9M2.6 0L9 6.4M5.4 0L9 3.6" stroke="#9c9c9c" stroke-width=".6" fill="none"/></svg>
<svg class="a" style="left:1273px;top:15px" width="9" height="9" viewBox="0 0 9 9"><path d="M0 1L8 9M2.6 0L9 6.4M5.4 0L9 3.6" stroke="#a8a8a8" stroke-width=".6" fill="none"/></svg>
<svg class="a" style="left:0px;top:608px" width="9" height="9" viewBox="0 0 9 9"><path d="M0 3L6 9M0 5.8L3.2 9M0 0.2L8.8 9" stroke="#8e8e8e" stroke-width=".6" fill="none"/></svg>
<svg class="a" style="left:726px;top:325px" width="9" height="9" viewBox="0 0 9 9"><path d="M0 3L6 9M0 5.8L3.2 9M0 0.2L8.8 9" stroke="#989898" stroke-width=".6" fill="none"/></svg>
<svg class="a" style="left:716px;top:617px" width="9" height="9" viewBox="0 0 9 9"><path d="M0 1L8 9M2.6 0L9 6.4M5.4 0L9 3.6" stroke="#a0a0a0" stroke-width=".6" fill="none"/></svg>
<svg class="a" style="left:0px;top:671px" width="9" height="9" viewBox="0 0 9 9"><path d="M0 3L6 9M0 5.8L3.2 9M0 0.2L8.8 9" stroke="#8e8e8e" stroke-width=".6" fill="none"/></svg>
<svg class="a" style="left:1272px;top:334px" width="9" height="9" viewBox="0 0 9 9"><path d="M0 1L8 9M2.6 0L9 6.4M5.4 0L9 3.6" stroke="#8c8c8c" stroke-width=".6" fill="none"/></svg>
<div class="a" style="left:465.3px;top:426px;width:98px;height:195.5px;background:rgba(25,25,25,.92);border-radius:4px;box-shadow:0 1px 4px 1px rgba(0,0,0,.45)">
<div class="mi" style="left:5.6px;top:6px;transform:translateY(0.6px) rotate(.05deg);color:#9a9a9a">Delete</div>
<div class="sep" style="top:20.6px"></div>
<div class="mi" style="top:26px;transform:translateY(0.5px) rotate(.05deg);color:#fff"><u>V</u>ertices</div>
<div class="mi" style="top:41px;transform:translateY(0.2px) rotate(.05deg);color:#fff"><u>E</u>dges</div>
<div class="a" style="left:.7px;right:.7px;top:52.9px;height:12.2px;background:linear-gradient(#7aa4e6,#5680c2)"></div>
<div class="mi" style="top:55px;transform:translateY(0.4px) rotate(.05deg);color:#000"><u>F</u>aces</div>
<div class="mi" style="top:70px;transform:translateY(0.7px) rotate(.05deg);color:#fff"><u>O</u>nly Edges &amp; Faces</div>
<div class="mi" style="top:85px;transform:translateY(0.4px) rotate(.05deg);color:#fff">O<u>n</u>ly Faces</div>
<div class="mi" style="top:104px;transform:translateY(0.8px) rotate(.05deg);color:#fff"><u>D</u>issolve Vertices</div>
<div class="mi" style="top:118px;transform:translateY(0.1px) rotate(.05deg);color:#fff">D<u>i</u>ssolve Edges</div>
<div class="mi" style="top:131px;transform:translateY(0.4px) rotate(.05deg);color:#fff">Di<u>s</u>solve Faces</div>
<div class="mi" style="top:150px;transform:translateY(0.9px) rotate(.05deg);color:#fff"><u>L</u>imited Dissolve</div>
<div class="mi" style="top:170px;transform:translateY(0.4px) rotate(.05deg);color:#fff">Edge <u>C</u>ollapse</div>
<div class="mi" style="top:183px;transform:translateY(0.7px) rotate(.05deg);color:#fff">Edge Loops</div>
<div class="sep" style="top:98px"></div>
<div class="sep" style="top:144.4px"></div>
<div class="sep" style="top:164.1px"></div>
</div>
<div class="a" style="left:548.4px;top:495.5px;width:177.6px;height:34.5px;background:rgba(22,22,22,.93);border-radius:4px;box-shadow:0 1px 4px 1px rgba(0,0,0,.4)">
<div class="mi" style="left:8.8px;top:7px;transform:translateY(.8px) rotate(.05deg);color:#fff;letter-spacing:-.3px">Delete selected vertices, edges or faces: <span style="color:#9a9ad8;margin-left:2px">Faces</span></div>
<div class="mi" style="left:8.8px;top:21px;transform:translateY(.2px) rotate(.05deg);color:#848484;font-family:'DejaVu Sans Mono','Liberation Mono',monospace;font-size:6.65px;letter-spacing:.02px">Python: bpy.ops.mesh.delete(type='FACE')</div>
</div>
</div></body></html>
